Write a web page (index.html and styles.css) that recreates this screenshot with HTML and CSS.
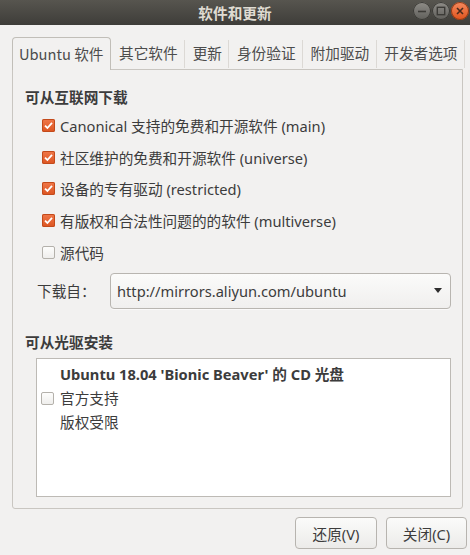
FILE: index.html
```html
<!DOCTYPE html>
<html lang="zh-CN">
<head>
<meta charset="utf-8">
<title>软件和更新</title>
<link rel="stylesheet" href="styles.css">
</head>
<body>
<div class="window">
  <div class="titlebar">
    <span class="title">软件和更新</span>
    <div class="wbtns">
      <span class="wbtn"><svg viewBox="0 0 18 18" width="18" height="18"><line x1="5" y1="9.5" x2="13" y2="9.5" stroke="#3c3b37" stroke-width="1.6"/></svg></span>
      <span class="wbtn"><svg viewBox="0 0 18 18" width="18" height="18"><rect x="5.3" y="5.3" width="7.4" height="7.4" fill="none" stroke="#3c3b37" stroke-width="1.4"/></svg></span>
      <span class="wbtn close"><svg viewBox="0 0 18 18" width="18" height="18"><path d="M6 6 L12 12 M12 6 L6 12" stroke="#4a2a1c" stroke-width="1.6"/></svg></span>
    </div>
  </div>
  <div class="content">
    <div class="tabs">
      <div class="tab active">Ubuntu 软件</div>
      <div class="tab">其它软件</div>
      <div class="tab">更新</div>
      <div class="tab">身份验证</div>
      <div class="tab">附加驱动</div>
      <div class="tab last">开发者选项</div>
    </div>
    <div class="frame">
      <div class="section-title">可从互联网下载</div>
      <div class="checks">
        <div class="row"><span class="cb on"><svg viewBox="0 0 13 13" width="13" height="13"><path d="M3 6.6 L5.4 9 L10 3.8" fill="none" stroke="#fff" stroke-width="1.8"/></svg></span><span>Canonical 支持的免费和开源软件 (main)</span></div>
        <div class="row"><span class="cb on"><svg viewBox="0 0 13 13" width="13" height="13"><path d="M3 6.6 L5.4 9 L10 3.8" fill="none" stroke="#fff" stroke-width="1.8"/></svg></span><span>社区维护的免费和开源软件 (universe)</span></div>
        <div class="row"><span class="cb on"><svg viewBox="0 0 13 13" width="13" height="13"><path d="M3 6.6 L5.4 9 L10 3.8" fill="none" stroke="#fff" stroke-width="1.8"/></svg></span><span>设备的专有驱动 (restricted)</span></div>
        <div class="row"><span class="cb on"><svg viewBox="0 0 13 13" width="13" height="13"><path d="M3 6.6 L5.4 9 L10 3.8" fill="none" stroke="#fff" stroke-width="1.8"/></svg></span><span>有版权和合法性问题的的软件 (multiverse)</span></div>
        <div class="row"><span class="cb"></span><span>源代码</span></div>
      </div>
      <div class="source-row">
        <span class="src-label">下载自：</span>
        <div class="combo"><span class="combo-text">http://mirrors.aliyun.com/ubuntu</span><span class="arrow"></span></div>
      </div>
      <div class="section-title second">可从光驱安装</div>
      <div class="listbox">
        <div class="cd-item">
          <span class="cb"></span>
          <div class="cd-text">
            <div class="cd-name">Ubuntu 18.04 'Bionic Beaver' 的 CD 光盘</div>
            <div class="cd-line">官方支持</div>
            <div class="cd-line">版权受限</div>
          </div>
        </div>
      </div>
    </div>
    <div class="buttons">
      <button class="btn revert">还原(V)</button>
      <button class="btn closebtn">关闭(C)</button>
    </div>
  </div>
</div>
</body>
</html>
```
FILE: styles.css
```css
* { box-sizing: border-box; }
html, body {
  margin: 0;
  padding: 0;
  background: #f2f1f0;
}
body {
  width: 470px;
  height: 555px;
  overflow: hidden;
  font-family: "Noto Sans", "Noto Sans CJK SC", sans-serif;
  font-size: 14.67px;
  color: #3c3c3c;
}
.window {
  width: 470px;
  height: 555px;
  display: flex;
  flex-direction: column;
}
.titlebar {
  height: 25px;
  flex: none;
  background: linear-gradient(to bottom, #57554f, #3e3d39);
  position: relative;
  display: flex;
  align-items: center;
  justify-content: center;
}
.title {
  color: #dfdbd2;
  font-weight: bold;
  font-size: 14.67px;
  font-family: "Noto Sans CJK SC", sans-serif;
  line-height: 25px;
}
.wbtns {
  position: absolute;
  right: 1px;
  top: 2px;
  display: flex;
  gap: 1px;
}
.wbtn {
  width: 18px;
  height: 18px;
  border-radius: 50%;
  background: linear-gradient(to bottom, #8f8d88, #5f5e5a);
  box-shadow: inset 0 0 0 1px #3a3935;
  display: block;
}
.wbtn svg { display: block; }
.wbtn.close {
  background: linear-gradient(to bottom, #f58a5f, #e0531c);
  box-shadow: inset 0 0 0 1px #8e3a17;
}
.content {
  flex: 1;
  display: flex;
  flex-direction: column;
  padding: 12px 7px 0 12px;
}
.tabs {
  display: flex;
  height: 32px;
  align-items: stretch;
  position: relative;
  z-index: 1;
}
.tab {
  padding: 0 7.5px;
  line-height: 32px;
  color: #4c4c4c;
  font-family: "Noto Sans CJK SC", sans-serif;
  position: relative;
  white-space: nowrap;
}
.tab::after {
  content: "";
  position: absolute;
  right: 0;
  top: 3px;
  bottom: 1px;
  width: 1px;
  background: #dcd9d5;
}
.tab.active {
  border: 1px solid #c1beb8;
  border-bottom: none;
  border-radius: 4px 4px 0 0;
  background: #f2f1f0;
  padding: 0 7px 0 6px;
  line-height: 31px;
  height: 33px;
  margin-bottom: -1px;
}
.tab.active::after { display: none; }
.tab.ubuntu {
  font-family: "Noto Sans", "Noto Sans CJK SC", sans-serif;
}
.frame {
  border: 1px solid #c9c6c1;
  border-radius: 0 0 3px 3px;
  height: 440px;
  flex: none;
  padding: 17px 11px 11px 12px;
  display: flex;
  flex-direction: column;
}
.section-title {
  font-weight: bold;
  line-height: 20px;
  font-family: "Noto Sans CJK SC", sans-serif;
}
.checks {
  margin-top: 3px;
  padding-left: 17px;
}
.row {
  display: flex;
  align-items: center;
  height: 31.6px;
}
.cb {
  width: 13px;
  height: 13px;
  flex: none;
  border-radius: 2px;
  border: 1px solid #b4b1ab;
  background: linear-gradient(to bottom, #fdfdfc, #efeeec);
  margin-right: 5px;
  position: relative;
}
.cb.on {
  border: none;
  background: linear-gradient(to bottom, #f0784a, #dc5420);
  box-shadow: inset 0 0 0 1px #c24a1b;
}
.cb svg { display: block; }
.row span:last-child { white-space: nowrap; }
.source-row {
  display: flex;
  align-items: center;
  margin-top: 5px;
  height: 36px;
}
.src-label {
  width: 85px;
  padding-left: 12px;
  flex: none;
  font-family: "Noto Sans CJK SC", sans-serif;
}
.combo {
  flex: 1;
  height: 36px;
  border: 1px solid #b8b5b0;
  border-radius: 4px;
  background: linear-gradient(to bottom, #fbfbfa, #f0efee);
  display: flex;
  align-items: center;
  padding: 0 7px 0 6px;
  box-shadow: 0 1px 0 rgba(255,255,255,0.6);
}
.combo-text { flex: 1; white-space: nowrap; }
.arrow {
  width: 0;
  height: 0;
  border-left: 4.5px solid transparent;
  border-right: 4.5px solid transparent;
  border-top: 5px solid #2e2e2e;
  margin-right: 1px;
}
.section-title.second {
  margin-top: 23px;
}
.listbox {
  margin: 6px 0 0 11px;
  height: 139px;
  border: 1px solid #bdbab5;
  background: #ffffff;
  padding: 4px 0 0 4px;
}
.cd-item {
  display: flex;
  align-items: center;
}
.cd-item .cb { margin-right: 6px; }
.cd-text { line-height: 23.5px; }
.cd-name {
  font-weight: bold;
}
.cd-line {
  font-family: "Noto Sans CJK SC", sans-serif;
}
.buttons {
  display: flex;
  justify-content: flex-end;
  gap: 9px;
  margin-top: 8px;
  margin-right: -4px;
}
.btn {
  height: 32px;
  border: 1px solid #b7b4af;
  border-radius: 4px;
  background: linear-gradient(to bottom, #fbfbfa, #ecebe9);
  font-family: "Noto Sans", "Noto Sans CJK SC", sans-serif;
  font-size: 14.67px;
  color: #3c3c3c;
  padding: 0;
}
.btn.revert { width: 82px; }
.btn.closebtn { width: 81px; }
```
